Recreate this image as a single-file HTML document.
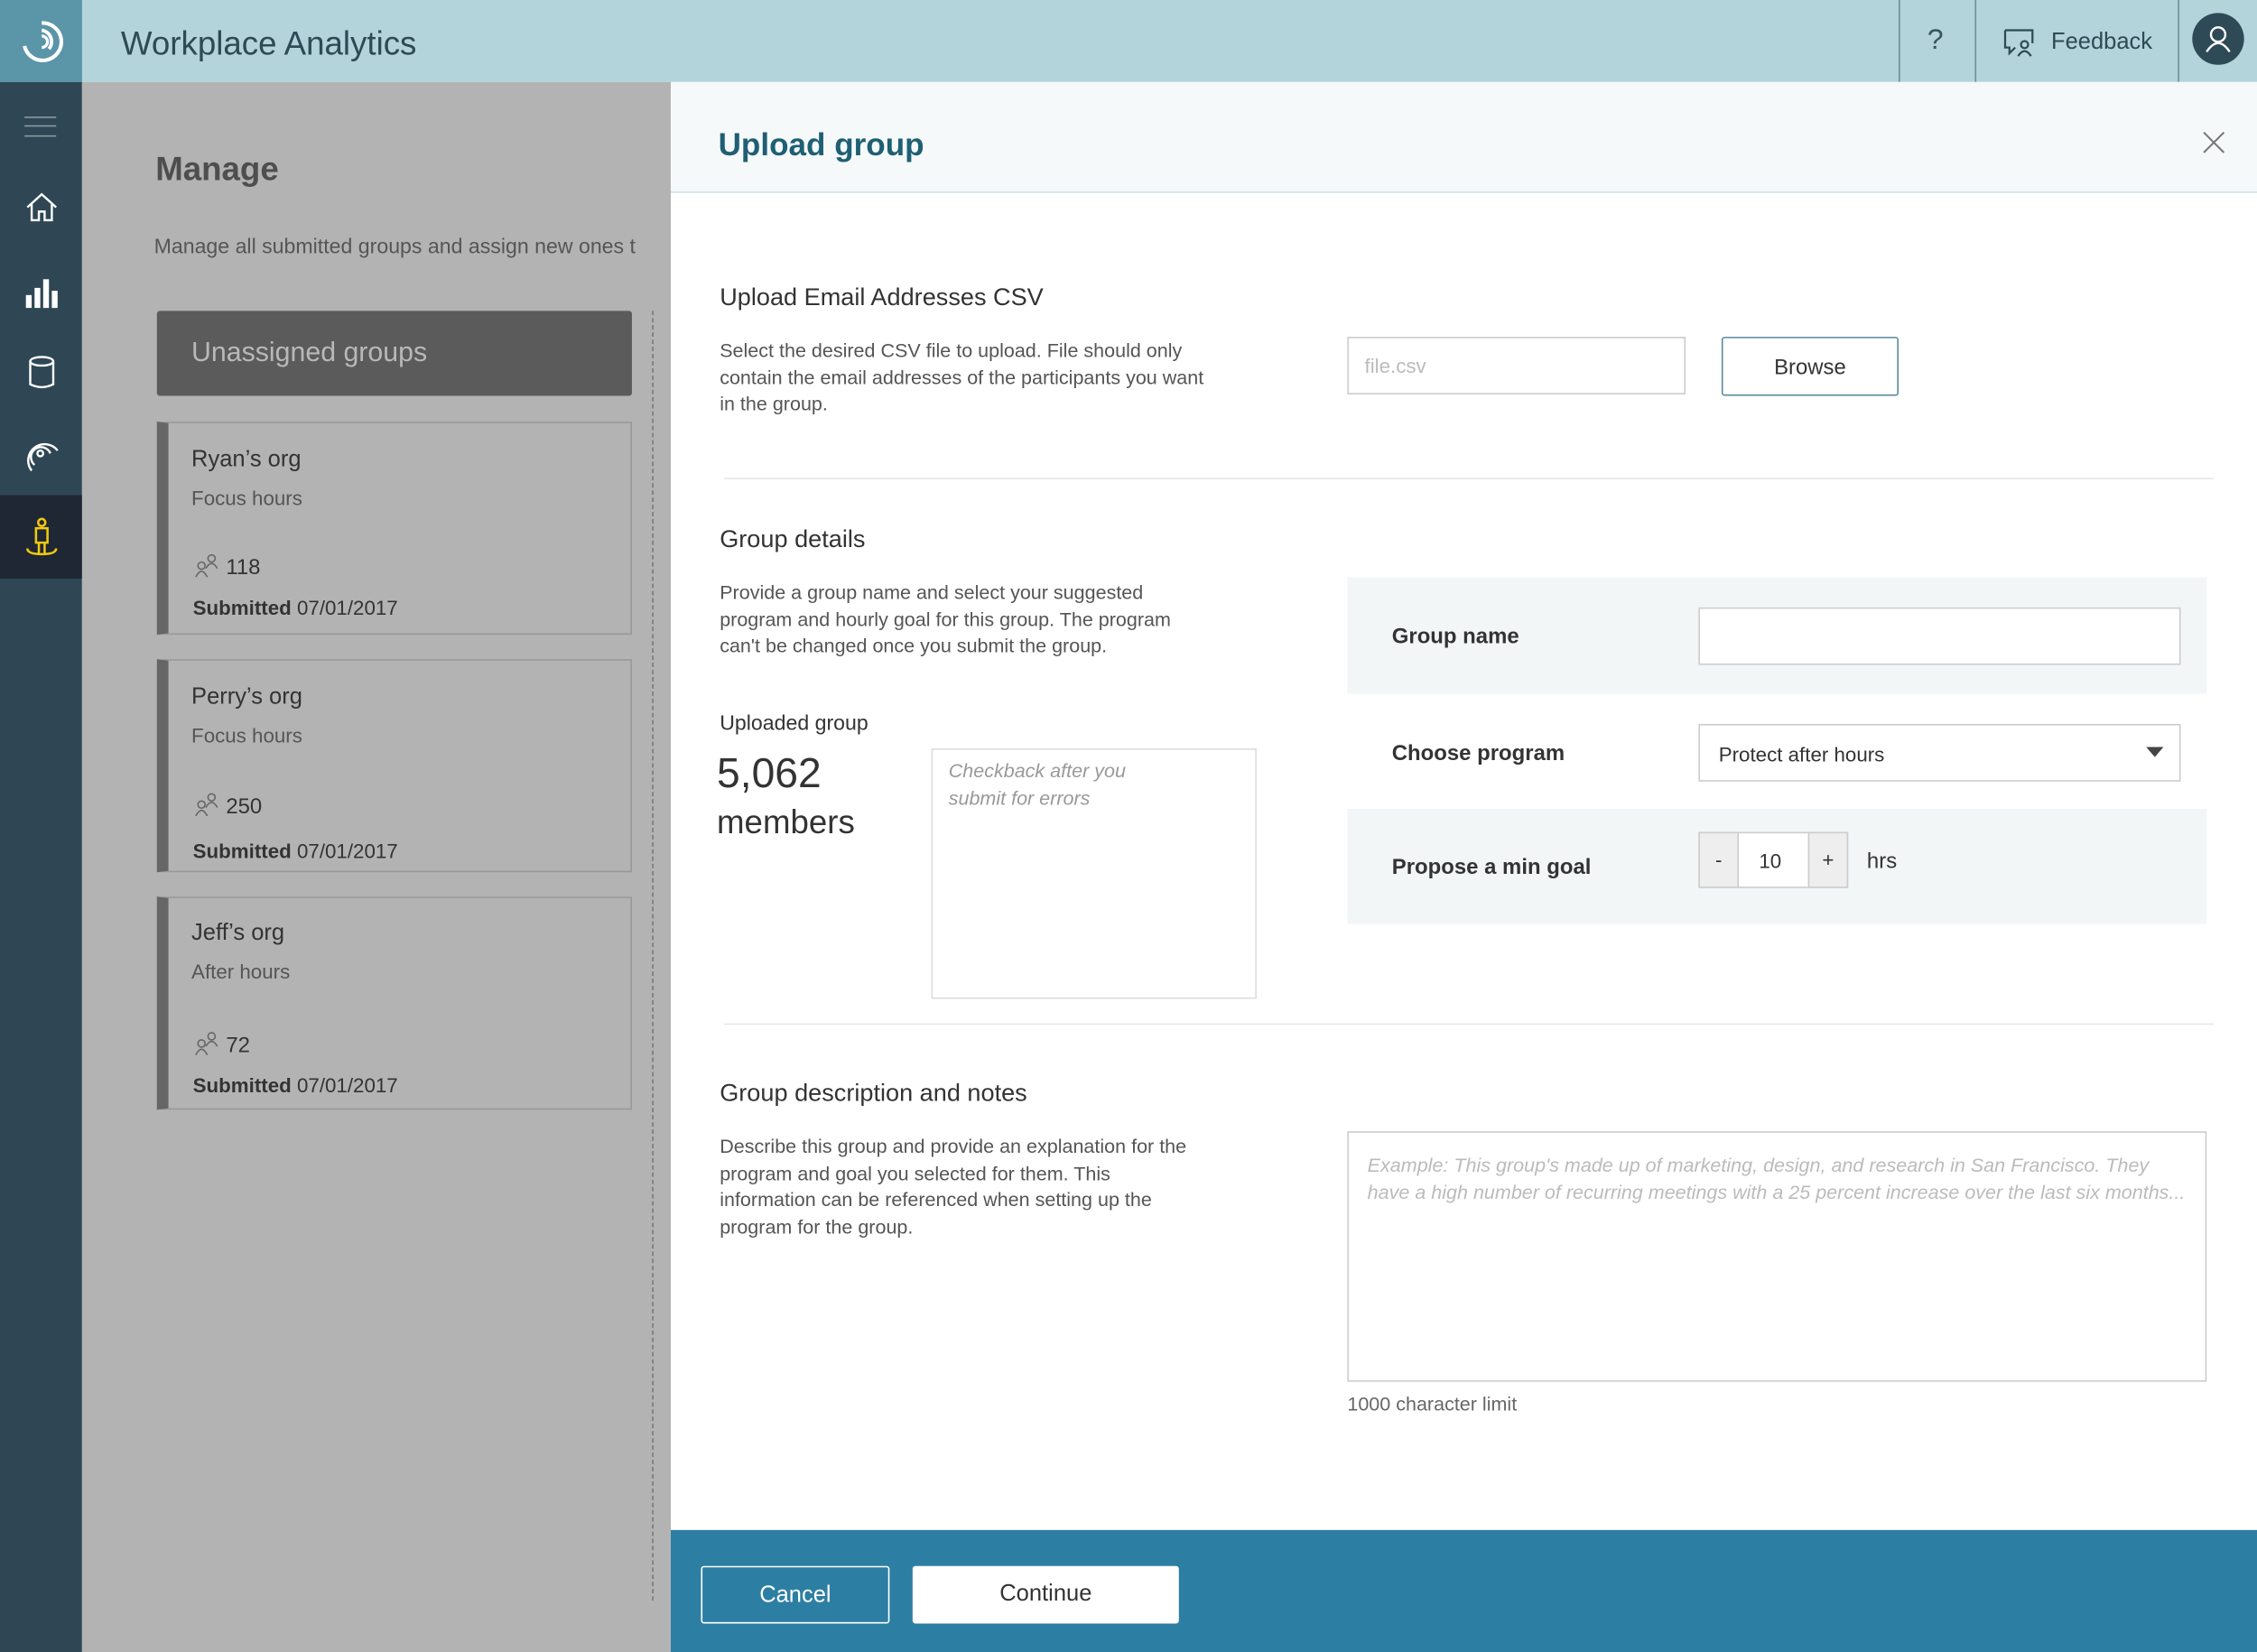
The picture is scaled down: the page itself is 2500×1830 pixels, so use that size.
<!DOCTYPE html>
<html><head><meta charset="utf-8"><style>
*{box-sizing:border-box;margin:0;padding:0}
html,body{width:2500px;height:1830px;overflow:hidden;background:#fff}
#w{width:1568px;height:1148px;position:relative;transform:scale(1.5944);transform-origin:0 0;font-family:"Liberation Sans",sans-serif;color:#333}
.a{position:absolute}
.t{position:absolute;white-space:nowrap}
.p{font-size:13.5px;line-height:18.5px;color:#555}
</style></head><body><div id="w">
<div class="a" style="left:0;top:0;width:1568px;height:57px;background:#b2d4da"></div>
<div class="a" style="left:0;top:0;width:57px;height:57px;background:#5b95a8"></div>
<svg class="a" style="left:10px;top:10px" width="38" height="38" viewBox="0 0 38 38"><path d="M7 22 A13 13 0 1 0 19 6" fill="none" stroke="#fff" stroke-width="2.6"/><path d="M19 11 A8 8 0 0 1 24 24" fill="none" stroke="#fff" stroke-width="2.4"/><path d="M19 15 A4 4 0 0 1 19 23" fill="none" stroke="#fff" stroke-width="2"/></svg>
<div class="t" style="left:84px;top:17px;font-size:23px;color:#2d4a55">Workplace Analytics</div>
<div class="a" style="left:1319px;top:0;width:1px;height:57px;background:#6f8f97"></div>
<div class="a" style="left:1372px;top:0;width:1px;height:57px;background:#6f8f97"></div>
<div class="a" style="left:1513px;top:0;width:1px;height:57px;background:#6f8f97"></div>
<div class="t" style="left:1339px;top:17px;font-size:20px;color:#3a5560">?</div>
<svg class="a" style="left:1392px;top:20px" width="22" height="20" viewBox="0 0 22 20"><path d="M1 1H20V10M8 13L4 17V13H1V1" fill="none" stroke="#2d4a55" stroke-width="1.4"/><circle cx="14.5" cy="11" r="2.5" fill="none" stroke="#2d4a55" stroke-width="1.4"/><path d="M10 19Q14.5 12 19 19" fill="none" stroke="#2d4a55" stroke-width="1.4"/></svg>
<div class="t" style="left:1425px;top:21px;font-size:16px;color:#2d4a55">Feedback</div>
<div class="a" style="left:1523px;top:9px;width:36px;height:36px;border-radius:50%;background:#2e4a56"></div>
<svg class="a" style="left:1530px;top:16px" width="22" height="22" viewBox="0 0 22 22"><circle cx="11" cy="8" r="5" fill="none" stroke="#fff" stroke-width="1.5"/><path d="M3 20Q11 8 19 20" fill="none" stroke="#fff" stroke-width="1.5"/></svg>
<div class="a" style="left:0;top:57px;width:57px;height:1091px;background:#2f4754"></div>
<div class="a" style="left:0;top:344px;width:57px;height:58px;background:#1e2733"></div>
<div class="a" style="left:17px;top:81px;width:22px;height:14px;border-top:1px solid #8a9aa3;border-bottom:1px solid #8a9aa3"></div>
<div class="a" style="left:17px;top:87px;width:22px;height:1px;background:#8a9aa3"></div>
<svg class="a" style="left:17px;top:132px" width="24" height="24" viewBox="0 0 24 24" fill="none" stroke="#fff" stroke-width="1.5"><path d="M2 12L12 3L22 12M5 10V21H10V15H14V21H19V10"/></svg>
<svg class="a" style="left:17px;top:192px" width="24" height="22" viewBox="0 0 24 22" fill="#fff"><rect x="1" y="13" width="4" height="9"/><rect x="7" y="8" width="4" height="14"/><rect x="13" y="2" width="4" height="20"/><rect x="19" y="10" width="4" height="12"/></svg>
<svg class="a" style="left:19px;top:247px" width="20" height="24" viewBox="0 0 20 24" fill="none" stroke="#fff" stroke-width="1.5"><ellipse cx="10" cy="4" rx="8" ry="3"/><path d="M2 4V20Q10 24 18 20V4"/></svg>
<svg class="a" style="left:16px;top:302px" width="28" height="26" viewBox="0 0 28 26" fill="none" stroke="#fff" stroke-width="1.5"><circle cx="12" cy="13" r="2"/><path d="M8 21A7 7 0 1 1 19 13M6 25A11 11 0 1 1 24 11"/></svg>
<svg class="a" style="left:16px;top:359px" width="26" height="28" viewBox="0 0 26 28" fill="none" stroke="#f2c811" stroke-width="1.6"><circle cx="13" cy="4" r="2.5"/><path d="M9 8H17V18H9ZM11 18V26M15 18V26M3 22Q3 26 13 26Q23 26 23 22"/></svg>
<div class="a" style="left:57px;top:57px;width:409px;height:1091px;background:#b3b3b3"></div>
<div class="t" style="left:108px;top:104px;font-size:23px;font-weight:bold;color:#4e4e4e">Manage</div>
<div class="t" style="left:107px;top:164px;font-size:14.5px;color:#555">Manage all submitted groups and assign new ones t</div>
<div class="a" style="left:109px;top:216px;width:330px;height:59px;background:#5b5b5b;border-radius:2px"></div>
<div class="t" style="left:133px;top:235px;font-size:19px;color:#b8b8b8">Unassigned groups</div>
<div class="a" style="left:453px;top:216px;width:0;height:896px;border-left:1px dashed #777"></div>

<div class="a" style="left:109px;top:293px;width:330px;height:148px;border:1px solid #999;border-left:8px solid #666"></div>
<div class="t" style="left:133px;top:311px;font-size:16px;color:#333">Ryan’s org</div>
<div class="t" style="left:133px;top:338px;font-size:14px;color:#555">Focus hours</div>
<svg class="a" style="left:135px;top:384px" width="18" height="17" viewBox="0 0 18 17" fill="none" stroke="#666" stroke-width="1"><circle cx="5" cy="9" r="2.5"/><path d="M1 17Q5 9 9 17"/><circle cx="12" cy="4" r="2.5"/><path d="M8 11Q12 4 16 11"/></svg>
<div class="t" style="left:157px;top:386px;font-size:15px;color:#333">118</div>
<div class="t" style="left:134px;top:414px;font-size:14px;color:#333"><b>Submitted</b> 07/01/2017</div>

<div class="a" style="left:109px;top:458px;width:330px;height:148px;border:1px solid #999;border-left:8px solid #666"></div>
<div class="t" style="left:133px;top:476px;font-size:16px;color:#333">Perry’s org</div>
<div class="t" style="left:133px;top:503px;font-size:14px;color:#555">Focus hours</div>
<svg class="a" style="left:135px;top:550px" width="18" height="17" viewBox="0 0 18 17" fill="none" stroke="#666" stroke-width="1"><circle cx="5" cy="9" r="2.5"/><path d="M1 17Q5 9 9 17"/><circle cx="12" cy="4" r="2.5"/><path d="M8 11Q12 4 16 11"/></svg>
<div class="t" style="left:157px;top:552px;font-size:15px;color:#333">250</div>
<div class="t" style="left:134px;top:583px;font-size:14px;color:#333"><b>Submitted</b> 07/01/2017</div>

<div class="a" style="left:109px;top:623px;width:330px;height:148px;border:1px solid #999;border-left:8px solid #666"></div>
<div class="t" style="left:133px;top:640px;font-size:16px;color:#333">Jeff’s org</div>
<div class="t" style="left:133px;top:667px;font-size:14px;color:#555">After hours</div>
<svg class="a" style="left:135px;top:716px" width="18" height="17" viewBox="0 0 18 17" fill="none" stroke="#666" stroke-width="1"><circle cx="5" cy="9" r="2.5"/><path d="M1 17Q5 9 9 17"/><circle cx="12" cy="4" r="2.5"/><path d="M8 11Q12 4 16 11"/></svg>
<div class="t" style="left:157px;top:718px;font-size:15px;color:#333">72</div>
<div class="t" style="left:134px;top:746px;font-size:14px;color:#333"><b>Submitted</b> 07/01/2017</div>

<div class="a" style="left:466px;top:57px;width:1102px;height:1091px;background:#fff"></div>
<div class="a" style="left:466px;top:57px;width:1102px;height:77px;background:#f5f9fa;border-bottom:1px solid #cfe0e5"></div>
<div class="t" style="left:499px;top:88px;font-size:22px;font-weight:bold;color:#1f5f74">Upload group</div>
<svg class="a" style="left:1530px;top:91px" width="16" height="16" viewBox="0 0 16 16" stroke="#777" stroke-width="1.3"><path d="M1 1L15 15M15 1L1 15"/></svg>

<div class="t" style="left:500px;top:197px;font-size:17px;color:#333">Upload Email Addresses CSV</div>
<div class="a p" style="left:500px;top:235px;width:345px">Select the desired CSV file to upload. File should only contain the email addresses of the participants you want in the group.</div>
<div class="a" style="left:936px;top:234px;width:235px;height:40px;border:1px solid #ccc"></div>
<div class="t" style="left:948px;top:246px;font-size:14px;color:#bbb">file.csv</div>
<div class="a" style="left:1196px;top:234px;width:123px;height:41px;border:1px solid #5a8a99;border-radius:2px;text-align:center;line-height:41px;font-size:15px;color:#333">Browse</div>
<div class="a" style="left:503px;top:332px;width:1035px;height:1px;background:#e6e6e6"></div>

<div class="t" style="left:500px;top:365px;font-size:17px;color:#333">Group details</div>
<div class="a p" style="left:500px;top:403px;width:345px">Provide a group name and select your suggested program and hourly goal for this group. The program can't be changed once you submit the group.</div>
<div class="t" style="left:500px;top:495px;font-size:14.5px;color:#333">Uploaded group</div>
<div class="t" style="left:498px;top:522px;font-size:29px;color:#333">5,062</div>
<div class="t" style="left:498px;top:558px;font-size:23px;color:#333">members</div>
<div class="a" style="left:647px;top:520px;width:226px;height:174px;border:1px solid #ddd"></div>
<div class="a p" style="left:659px;top:527px;width:150px;color:#999;font-style:italic">Checkback after you submit for errors</div>

<div class="a" style="left:936px;top:401px;width:597px;height:81px;background:#f2f6f7"></div>
<div class="a" style="left:936px;top:562px;width:597px;height:80px;background:#f2f6f7"></div>
<div class="t" style="left:967px;top:434px;font-size:15px;font-weight:bold;color:#333">Group name</div>
<div class="a" style="left:1180px;top:422px;width:335px;height:40px;border:1px solid #ccc;background:#fff"></div>
<div class="t" style="left:967px;top:515px;font-size:15px;font-weight:bold;color:#333">Choose program</div>
<div class="a" style="left:1180px;top:503px;width:335px;height:40px;border:1px solid #ccc;background:#fff"></div>
<div class="t" style="left:1194px;top:516px;font-size:14px;color:#333">Protect after hours</div>
<div class="a" style="left:1491px;top:519px;border-left:6px solid transparent;border-right:6px solid transparent;border-top:7px solid #444"></div>
<div class="t" style="left:967px;top:594px;font-size:15px;font-weight:bold;color:#333">Propose a min goal</div>
<div class="a" style="left:1180px;top:578px;width:104px;height:39px;border:1px solid #ccc;background:#fff"></div>
<div class="a" style="left:1180px;top:578px;width:28px;height:39px;background:#eee;border:1px solid #ccc;text-align:center;line-height:37px;font-size:14px">-</div>
<div class="a" style="left:1256px;top:578px;width:28px;height:39px;background:#eee;border:1px solid #ccc;text-align:center;line-height:37px;font-size:14px">+</div>
<div class="t" style="left:1222px;top:590px;font-size:14px;color:#333">10</div>
<div class="t" style="left:1297px;top:590px;font-size:15px;color:#333">hrs</div>
<div class="a" style="left:503px;top:711px;width:1035px;height:1px;background:#e6e6e6"></div>

<div class="t" style="left:500px;top:750px;font-size:17px;color:#333">Group description and notes</div>
<div class="a p" style="left:500px;top:788px;width:335px">Describe this group and provide an explanation for the program and goal you selected for them. This information can be referenced when setting up the program for the group.</div>
<div class="a" style="left:936px;top:786px;width:597px;height:174px;border:1px solid #ccc"></div>
<div class="a p" style="left:950px;top:801px;width:570px;color:#bbb;font-style:italic">Example: This group's made up of marketing, design, and research in San Francisco. They have a high number of recurring meetings with a 25 percent increase over the last six months...</div>
<div class="t" style="left:936px;top:968px;font-size:13.5px;color:#666">1000 character limit</div>

<div class="a" style="left:466px;top:1063px;width:1102px;height:85px;background:#2d7ea3"></div>
<div class="a" style="left:487px;top:1088px;width:131px;height:40px;border:1px solid #fff;border-radius:2px;text-align:center;line-height:40px;font-size:16px;color:#fff">Cancel</div>
<div class="a" style="left:634px;top:1088px;width:185px;height:40px;background:#fff;border-radius:2px;text-align:center;line-height:40px;font-size:16px;color:#333">Continue</div>
</div></body></html>
